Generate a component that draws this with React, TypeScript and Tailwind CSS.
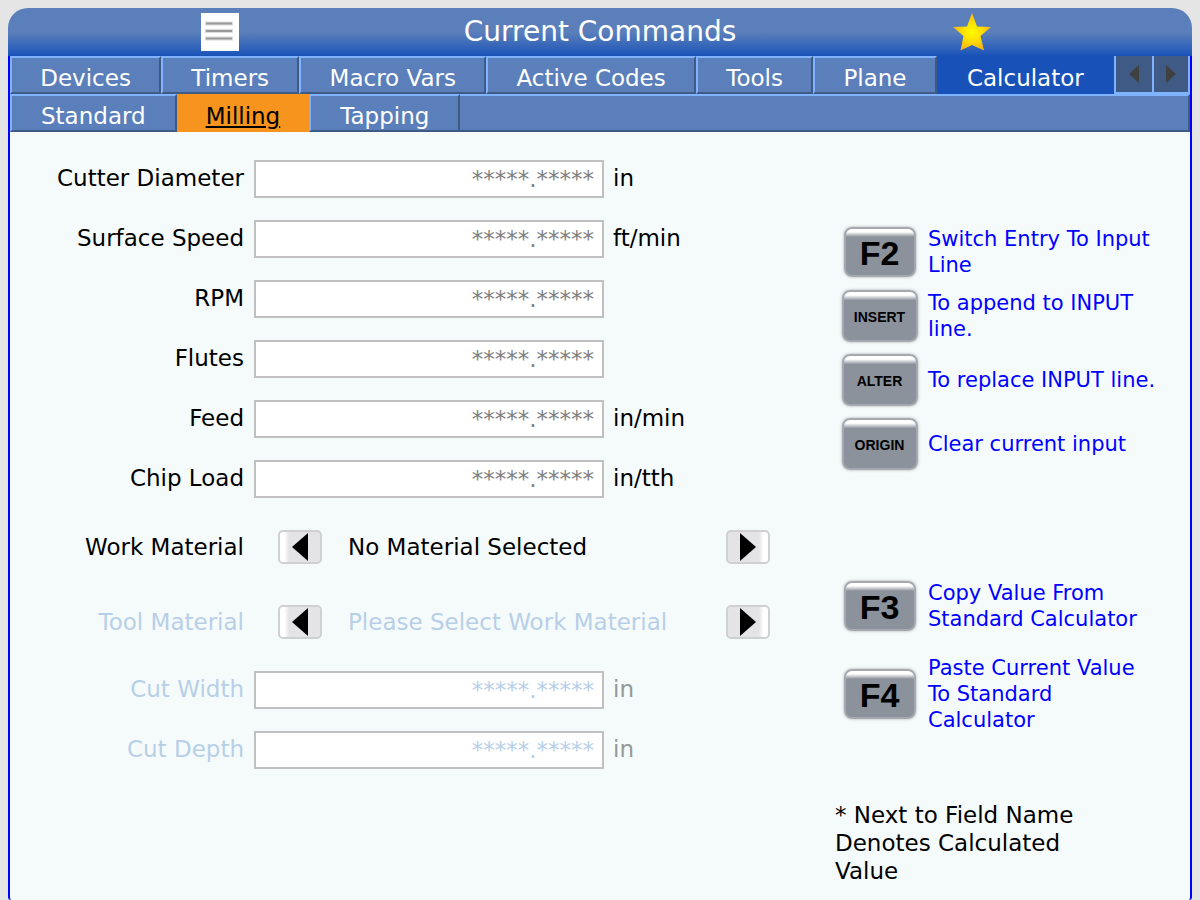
import { useState } from "react";

type Field = {
  id: string;
  label: string;
  unit?: string;
  disabled?: boolean;
};

type KeyHint = {
  name: string;
  text: string;
};

const tabs = ["Devices", "Timers", "Macro Vars", "Active Codes", "Tools", "Plane", "Calculator"];
const subTabs = ["Standard", "Milling", "Tapping"];

const speedFields: Field[] = [
  { id: "diameter", label: "Cutter Diameter", unit: "in" },
  { id: "surface", label: "Surface Speed", unit: "ft/min" },
  { id: "rpm", label: "RPM" },
  { id: "flutes", label: "Flutes" },
  { id: "feed", label: "Feed", unit: "in/min" },
  { id: "chip", label: "Chip Load", unit: "in/tth" },
];

const cutFields: Field[] = [
  { id: "width", label: "Cut Width", unit: "in", disabled: true },
  { id: "depth", label: "Cut Depth", unit: "in", disabled: true },
];

const entryKeys: KeyHint[] = [
  { name: "F2", text: "Switch Entry To Input Line" },
  { name: "INSERT", text: "To append to INPUT line." },
  { name: "ALTER", text: "To replace INPUT line." },
  { name: "ORIGIN", text: "Clear current input" },
];

const copyKeys: KeyHint[] = [
  { name: "F3", text: "Copy Value From Standard Calculator" },
  { name: "F4", text: "Paste Current Value To Standard Calculator" },
];

const raised = "border-2 border-t-[#7fb2ff] border-l-[#7fb2ff] border-r-[#405a86] border-b-[#405a86] bg-[#5b7fba] text-white";

function MenuIcon() {
  return (
    <svg width="38" height="38" viewBox="0 0 38 38">
      <rect width="38" height="38" fill="#fff" />
      <path d="M4 10.5h28M4 18h28M4 25.5h28" stroke="#dcdcdc" strokeWidth="4" />
      <path d="M5 10.5h26M5 18h26M5 25.5h26" stroke="#999" strokeWidth="2" />
    </svg>
  );
}

function StarIcon() {
  return (
    <svg width="38" height="38" viewBox="0 0 38 38">
      <defs>
        <radialGradient id="star">
          <stop offset="0" stopColor="#fffb00" />
          <stop offset="0.5" stopColor="#ffe000" />
          <stop offset="1" stopColor="#f5b416" />
        </radialGradient>
      </defs>
      <path d="M19 0 L24 13.500 L38 14 L27.500 23 L31 37.500 L19 32 L7.500 37.500 L10.500 23 L0 14 L14 13.500Z" fill="url(#star)" />
    </svg>
  );
}

function Triangle({ left, className }: { left?: boolean; className: string }) {
  return (
    <svg viewBox="0 0 16 28" preserveAspectRatio="none" className={className}>
      <path d={left ? "M16 0V28L0 14Z" : "M0 0V28L16 14Z"} fill="currentColor" />
    </svg>
  );
}

function FieldRow({ id, label, unit, disabled }: Field) {
  return (
    <div className="flex h-[38px] items-center">
      <label htmlFor={id} className={`w-[234px] shrink-0 pb-0.5 text-right ${disabled ? "text-[#b8cfe8]" : "text-black"}`}>
        {label}
      </label>
      <input
        id={id}
        type="text"
        disabled={disabled}
        defaultValue="*****.*****"
        className={`ml-[10px] h-[38px] w-[350px] border-2 border-[#c0c0c0] bg-white px-2 text-right outline-none ${disabled ? "text-[#b8cfe8]" : "text-[#808080]"}`}
      />
      <span className={`ml-[9px] pb-0.5 ${disabled ? "text-[#949899]" : "text-black"}`}>{unit}</span>
    </div>
  );
}

function ArrowButton({ left, label, disabled }: { left?: boolean; label: string; disabled?: boolean }) {
  return (
    <button
      type="button"
      aria-label={label}
      disabled={disabled}
      className={`flex h-[34px] w-11 shrink-0 items-center justify-center rounded-[5px] border-2 border-[#d0d0d2] from-white from-15% via-[#e4e4e7] via-25% to-[#e4e4e7] bg-origin-border text-black ${left ? "bg-linear-to-r" : "bg-linear-to-l"}`}
    >
      <Triangle left={left} className="h-7 w-4" />
    </button>
  );
}

function MaterialRow({ label, value, disabled }: { label: string; value: string; disabled?: boolean }) {
  return (
    <div className={`flex h-[34px] items-center ${disabled ? "text-[#b8cfe8]" : "text-black"}`}>
      <span className="w-[234px] shrink-0 text-right">{label}</span>
      <div className="ml-[34px] flex w-[492px] items-center">
        <ArrowButton left label={`Previous ${label}`} disabled={disabled} />
        <span className="ml-[26px] flex-1 whitespace-nowrap">{value}</span>
        <ArrowButton label={`Next ${label}`} disabled={disabled} />
      </div>
    </div>
  );
}

function KeyRow({ name, text }: KeyHint) {
  const small = name.length > 2;
  return (
    <div className="flex min-h-[52px] items-center gap-1">
      <div className="flex w-[89px] shrink-0 justify-center">
        <button
          type="button"
          className={`flex items-center justify-center rounded-lg border-2 border-[#a4a9af] bg-linear-to-b from-white from-10% via-[#8b929b] via-20% to-[#8b929b] bg-origin-border pt-0.5 font-['Liberation_Sans',sans-serif] font-bold text-black shadow-[0_0_3px_#aaa] ${small ? "h-[52px] w-[76px] text-[14px]" : "h-[50px] w-[72px] text-[34px]"}`}
        >
          {name}
        </button>
      </div>
      <p className="max-w-[232px] text-[21px] leading-[26px] text-[#0000ff]">{text}</p>
    </div>
  );
}

export default function App() {
  const [tab, setTab] = useState("Calculator");
  const [subTab, setSubTab] = useState("Milling");

  return (
    <div className="flex min-h-screen flex-col bg-[#e5e5e5] px-2 pt-2 font-['DejaVu_Sans',sans-serif] text-[23px] leading-7">
      <header className="grid h-12 grid-cols-[1fr_auto_1fr] items-center rounded-t-[20px] bg-linear-to-b from-[#5b7fba] from-50% to-[#1852b8]">
        <button type="button" aria-label="Menu" className="justify-self-start pl-[193px]">
          <MenuIcon />
        </button>
        <h1 className="text-[28px] text-white">Current Commands</h1>
        <button type="button" aria-label="Favorite" className="justify-self-end pr-[201px]">
          <StarIcon />
        </button>
      </header>

      <div className="flex flex-1 flex-col rounded-b-[3px] border-x-2 border-[#0000ff] bg-[#f5fbfb]">
        <nav className="flex h-[38px]">
          {tabs.map((name) => (
            <button
              key={name}
              type="button"
              onClick={() => setTab(name)}
              className={`flex-auto px-6 pt-1.5 ${name === tab ? "border-2 border-[#1852b8] bg-[#1852b8] text-white" : raised}`}
            >
              {name}
            </button>
          ))}
          <button type="button" aria-label="Scroll tabs left" className="flex w-[38px] items-center justify-center border-b-2 border-l-2 border-[#7fb2ff] bg-[#405a86] text-[#404040]">
            <Triangle left className="h-[18px] w-[10px]" />
          </button>
          <button type="button" aria-label="Scroll tabs right" className="flex w-[38px] items-center justify-center border-x-2 border-b-2 border-[#7fb2ff] bg-[#405a86] text-[#404040]">
            <Triangle className="h-[18px] w-[10px]" />
          </button>
        </nav>
        <nav className="flex h-[38px]">
          {subTabs.map((name) => (
            <button
              key={name}
              type="button"
              onClick={() => setSubTab(name)}
              className={`px-[29px] pt-1.5 ${name === subTab ? "bg-[#f7941d] text-black underline decoration-2 underline-offset-2" : raised}`}
            >
              {name}
            </button>
          ))}
          <div className="flex-1 border-t-2 border-r-2 border-b-2 border-t-[#7fb2ff] border-r-[#405a86] border-b-[#405a86] bg-[#5b7fba]" />
        </nav>

        <main className="flex flex-1 justify-between pt-7">
          <form className="shrink-0">
            <div className="flex flex-col gap-[22px]">
              {speedFields.map((field) => (
                <FieldRow key={field.id} {...field} />
              ))}
            </div>
            <div className="my-8 flex flex-col gap-[41px]">
              <MaterialRow label="Work Material" value="No Material Selected" />
              <MaterialRow label="Tool Material" value="Please Select Work Material" disabled />
            </div>
            <div className="flex flex-col gap-[22px]">
              {cutFields.map((field) => (
                <FieldRow key={field.id} {...field} />
              ))}
            </div>
          </form>

          <aside className="w-[355px] shrink-0 pt-[66px]">
            <div className="flex flex-col gap-3">
              {entryKeys.map((key) => (
                <KeyRow key={key.name} {...key} />
              ))}
            </div>
            <div className="mt-[110px] flex flex-col gap-[23px]">
              {copyKeys.map((key) => (
                <KeyRow key={key.name} {...key} />
              ))}
            </div>
            <p className="mt-[68px] max-w-[260px] text-black">* Next to Field Name Denotes Calculated Value</p>
          </aside>
        </main>
      </div>
    </div>
  );
}
